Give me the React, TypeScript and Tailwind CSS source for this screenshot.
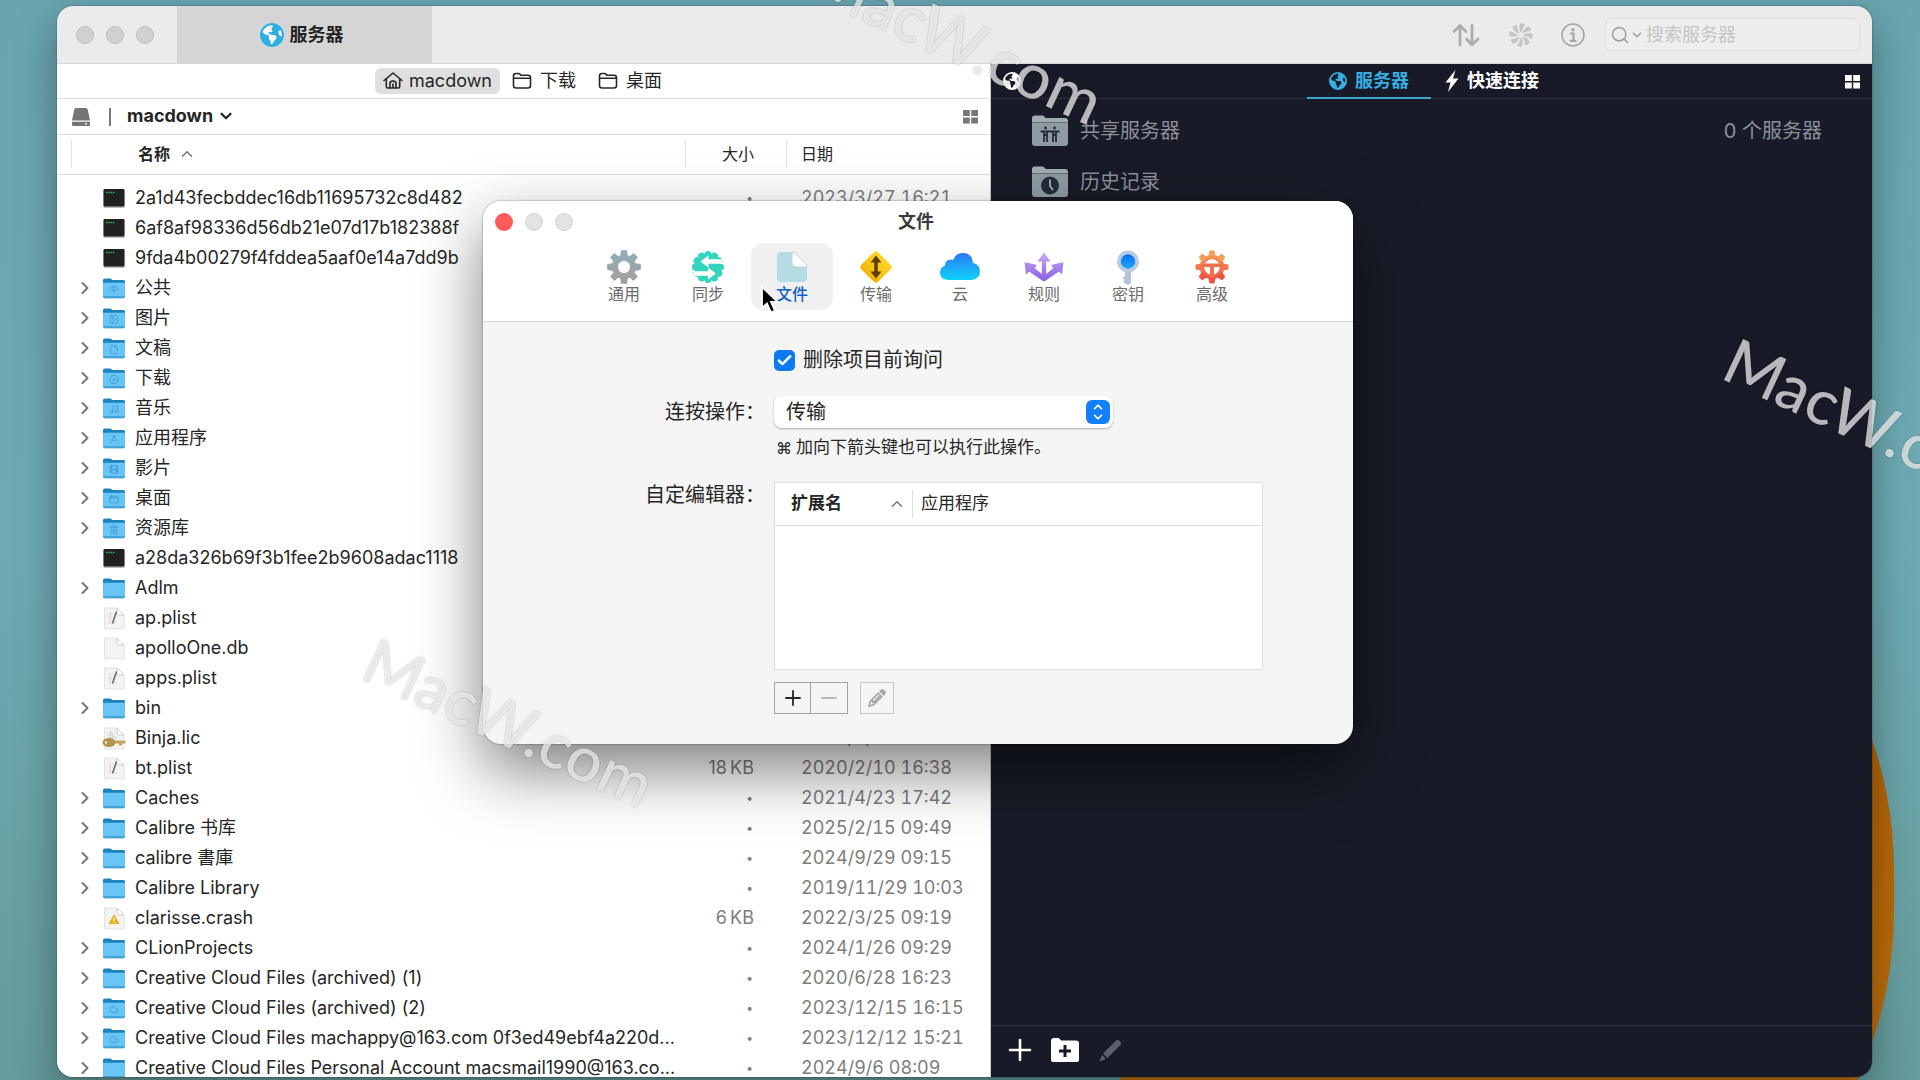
import type { ReactNode } from 'react';
import {
  AppWindow, Check, ChevronDown, ChevronRight, ChevronUp, CircleArrowDown, Cloud, File, Film,
  Image as ImageIcon, Landmark, Minus, Music, Plus, Search, Signpost, DraftingCompass,
} from 'lucide-react';
import { FaEarthAmericas, FaPencil } from 'react-icons/fa6';

type FileKind = 'folder' | 'exec' | 'plist' | 'doc' | 'license' | 'crash';

interface FileRow {
  name: string;
  kind: FileKind;
  badge?: typeof File;
  size?: string;
  date: string;
}

const files: FileRow[] = [
  { name: '2a1d43fecbddec16db11695732c8d482', kind: 'exec', date: '2023/3/27 16:21' },
  { name: '6af8af98336d56db21e07d17b182388f', kind: 'exec', date: '2023/3/27 16:21' },
  { name: '9fda4b00279f4fddea5aaf0e14a7dd9b', kind: 'exec', date: '2023/3/27 16:21' },
  { name: '公共', kind: 'folder', badge: Signpost, date: '2021/4/23 17:42' },
  { name: '图片', kind: 'folder', badge: ImageIcon, date: '2024/9/29 09:15' },
  { name: '文稿', kind: 'folder', badge: File, date: '2025/2/15 09:49' },
  { name: '下载', kind: 'folder', badge: CircleArrowDown, date: '2025/2/15 09:49' },
  { name: '音乐', kind: 'folder', badge: Music, date: '2024/1/26 09:29' },
  { name: '应用程序', kind: 'folder', badge: DraftingCompass, date: '2024/1/26 09:29' },
  { name: '影片', kind: 'folder', badge: Film, date: '2024/9/29 09:15' },
  { name: '桌面', kind: 'folder', badge: AppWindow, date: '2025/2/15 09:49' },
  { name: '资源库', kind: 'folder', badge: Landmark, date: '2024/9/29 09:15' },
  { name: 'a28da326b69f3b1fee2b9608adac1118', kind: 'exec', date: '2023/3/27 16:21' },
  { name: 'Adlm', kind: 'folder', date: '2022/3/25 09:19' },
  { name: 'ap.plist', kind: 'plist', size: '6\u2009KB', date: '2020/2/10 16:38' },
  { name: 'apolloOne.db', kind: 'doc', size: '6\u2009KB', date: '2020/2/10 16:38' },
  { name: 'apps.plist', kind: 'plist', size: '6\u2009KB', date: '2020/2/10 16:38' },
  { name: 'bin', kind: 'folder', date: '2021/4/23 17:42' },
  { name: 'Binja.lic', kind: 'license', size: '6\u2009KB', date: '2020/2/10 16:38' },
  { name: 'bt.plist', kind: 'plist', size: '18\u2009KB', date: '2020/2/10 16:38' },
  { name: 'Caches', kind: 'folder', date: '2021/4/23 17:42' },
  { name: 'Calibre 书库', kind: 'folder', date: '2025/2/15 09:49' },
  { name: 'calibre 書庫', kind: 'folder', date: '2024/9/29 09:15' },
  { name: 'Calibre Library', kind: 'folder', date: '2019/11/29 10:03' },
  { name: 'clarisse.crash', kind: 'crash', size: '6\u2009KB', date: '2022/3/25 09:19' },
  { name: 'CLionProjects', kind: 'folder', date: '2024/1/26 09:29' },
  { name: 'Creative Cloud Files (archived) (1)', kind: 'folder', date: '2020/6/28 16:23' },
  { name: 'Creative Cloud Files (archived) (2)', kind: 'folder', badge: Cloud, date: '2023/12/15 16:15' },
  { name: 'Creative Cloud Files machappy@163.com 0f3ed49ebf4a220d...', kind: 'folder', badge: Cloud, date: '2023/12/12 15:21' },
  { name: 'Creative Cloud Files Personal Account macsmail1990@163.co...', kind: 'folder', date: '2024/9/6 08:09' },
];

function FileIcon({ kind, badge: Badge }: { kind: FileKind; badge?: typeof File }) {
  if (kind === 'folder') {
    return (
      <svg className="size-6 shrink-0" viewBox="0 0 24 24">
        <path d="M1 4.2Q1 2.5 2.7 2.5H8q1 0 1.6.8l.6.7h11.3q1.5 0 1.5 1.5V18H1z" fill="#1c83bd" />
        <path d="M1 6.8h22v13.7q0 1.8-1.8 1.8H2.8Q1 22.3 1 20.5z" fill="#68c5f6" />
        <path d="M1 20v.5q0 1.8 1.8 1.8h18.4q1.8 0 1.8-1.8V20z" fill="#45a3d8" />
        {Badge && <Badge x={7} y={8.5} width={10} height={10} color="#3f9fd6" strokeWidth={2.2} />}
      </svg>
    );
  }
  if (kind === 'exec') {
    return (
      <svg className="size-6 shrink-0" viewBox="0 0 24 24">
        <rect x="1.5" y="4" width="21" height="18" rx="1" fill="#bdbdbd" />
        <rect x="1.5" y="3" width="21" height="17.5" rx="1" fill="#202121" />
        <path d="M4 6.5h9" stroke="#34a853" strokeWidth="1.6" strokeDasharray="1.6 .7" />
      </svg>
    );
  }
  return (
    <svg className="size-6 shrink-0" viewBox="0 0 24 24">
      <path d="M2.500 2H15l7 7V22q0 1-1 1H3.500q-1 0-1-1z" fill="#f3f3f3" stroke="#dcdcdc" strokeWidth=".8" />
      <path d="M15 2v5.500Q15 9 16.500 9H22z" fill="#fff" stroke="#c4c4c4" strokeWidth=".8" />
      {kind === 'plist' && (
        <>
          <path d="M6 8h8M6 11h5M6 14h5M6 17h9M8 8v9" stroke="#e2d3d3" strokeWidth=".8" />
          <path d="M14.500 5.500l-4 12" stroke="#666" strokeWidth="1.500" />
        </>
      )}
      {kind === 'license' && (
        <>
          <path d="M9 4q-5 5-2 9h9q-4-3-7-9z" fill="#dedede" />
          <path d="M12 14.500h11.500v3H20v2h-3v-2h-5z" fill="#c3a564" />
          <ellipse cx="7" cy="16.500" rx="6.500" ry="4.500" fill="#b39450" />
          <circle cx="4" cy="16.500" r="1.200" fill="#f3ead3" />
        </>
      )}
      {kind === 'crash' && (
        <>
          <path d="M12 8l5.500 10h-11z" fill="#e3b31c" />
          <path d="M12 11.500v3.500M12 16v1" stroke="#fff" strokeWidth="1.200" />
        </>
      )}
    </svg>
  );
}

function OutlineFolder() {
  return (
    <svg className="h-5 w-5" viewBox="0 0 20 20" fill="none" stroke="#262626" strokeWidth="1.6" strokeLinejoin="round">
      <path d="M1.500 5q0-2.500 2.500-2.500h2.500q1 0 1.600.8l.6.9H16q2.500 0 2.500 2.500V14.500q0 2.500-2.500 2.500H4q-2.500 0-2.500-2.500zM1.500 7.300h17" />
    </svg>
  );
}

function GridIcon({ className }: { className: string }) {
  return (
    <svg className={className} viewBox="0 0 15 15" fill="currentColor">
      <path d="M0 1h6.800v6H0zM8.200 1H15v6H8.200zM0 8.400h6.800v6H0zM8.200 8.400H15v6H8.200z" />
    </svg>
  );
}

function TrafficLights({ active }: { active?: boolean }) {
  return (
    <div className="flex gap-3">
      <button aria-label="关闭" className={active ? 'size-[18px] rounded-full bg-[#fc5b57]' : 'size-[18px] rounded-full border border-[#bcbcbc] bg-[#d1d1d1]'} />
      <button aria-label="最小化" className={active ? 'size-[18px] rounded-full border border-[#d4d4d4] bg-[#e3e3e3]' : 'size-[18px] rounded-full border border-[#bcbcbc] bg-[#d1d1d1]'} />
      <button aria-label="缩放" className={active ? 'size-[18px] rounded-full border border-[#d4d4d4] bg-[#e3e3e3]' : 'size-[18px] rounded-full border border-[#bcbcbc] bg-[#d1d1d1]'} />
    </div>
  );
}

function TitleBar() {
  return (
    <header className="flex h-[58px] shrink-0 items-center border-b border-[#d6d6d6] bg-[#ebebeb]">
      <div className="w-[120px] shrink-0 pl-[19px]">
        <TrafficLights />
      </div>
      <button className="flex h-full w-[255px] shrink-0 items-center justify-center gap-1.5 bg-[#d5d5d5] pr-1.5 text-lg font-bold text-[#222]">
        <span className="flex size-6 items-center justify-center rounded-full bg-white">
          <FaEarthAmericas className="size-6 text-[#2eaee2]" />
        </span>
        服务器
      </button>
      <div className="ml-auto flex items-center pr-3">
        <button aria-label="传输列表" className="mr-[29px]">
          <svg className="h-7 w-7" viewBox="0 0 28 28" fill="none" stroke="#adadad" strokeWidth="2.800" strokeLinecap="round" strokeLinejoin="round">
            <path d="M8 24V4.500M2 10.500l6-6 6 6M20 4.500V24M14.500 18l5.500 6 6-6" />
          </svg>
        </button>
        <button aria-label="活动" className="mr-7">
          <svg className="h-6 w-6" viewBox="-12 -12 24 24" fill="#c4c4c4">
            {[0, 45, 90, 135, 180, 225, 270, 315].map((a) => (
              <path key={a} transform={`rotate(${a})`} d="M0-2C-2-5-2-8.500-1-11.500 1.500-12 3.500-11 4-10 2-8 1-5 0-2z" />
            ))}
          </svg>
        </button>
        <button aria-label="简介" className="mr-5">
          <svg className="h-6 w-6" viewBox="0 0 24 24" fill="none" stroke="#a6a6a6" strokeWidth="1.600">
            <circle cx="12" cy="12" r="11" />
            <circle cx="12" cy="6.800" r="1.800" fill="#a6a6a6" stroke="none" />
            <path d="M9 10.500h3.500v7M8.800 17.800h6.700" strokeWidth="2.200" />
          </svg>
        </button>
        <label className="flex h-[33px] w-[255px] items-center rounded-md border border-[#dcdcdc] bg-[#eeeeee] pl-1">
          <Search className="size-5 text-[#9d9d9d]" strokeWidth={1.8} />
          <ChevronDown className="size-3.5 text-[#9d9d9d]" strokeWidth={2.5} />
          <input
            type="text"
            aria-label="搜索服务器"
            placeholder="搜索服务器"
            className="ml-0.5 w-40 bg-transparent text-lg outline-none placeholder:text-[#c4c4c4]"
          />
        </label>
      </div>
    </header>
  );
}

function FileTable() {
  return (
    <table className="w-full table-fixed border-collapse text-left text-lg">
      <colgroup>
        <col className="w-[629px]" />
        <col className="w-[101px]" />
        <col />
      </colgroup>
      <thead>
        <tr className="h-[39px] border-b border-[#dedede] text-base leading-6">
          <th className="p-0 pl-3.5">
            <div className="flex h-7 items-center gap-2 border-x border-[#e3e3e3] pl-[66px] font-bold">
              名称
              <ChevronUp className="size-[18px] text-[#777]" strokeWidth={2} />
            </div>
          </th>
          <th className="p-0 font-normal">
            <div className="flex h-7 items-center justify-end border-r border-[#e3e3e3] pr-8">大小</div>
          </th>
          <th className="p-0 pl-3.5 font-normal">日期</th>
        </tr>
      </thead>
      <tbody>
        <tr aria-hidden="true" className="h-[9px]">
          <td colSpan={3} className="p-0" />
        </tr>
        {files.map((file) => (
          <tr key={file.name} className="h-[30px]">
            <td className="p-0">
              <div className="flex h-[30px] items-center pl-[18px]">
                {file.kind === 'folder' ? (
                  <button aria-label={`展开 ${file.name}`} className="w-[27px]">
                    <ChevronRight className="size-5 text-[#777]" strokeWidth={2.5} />
                  </button>
                ) : (
                  <span className="w-[27px]" />
                )}
                <FileIcon kind={file.kind} badge={file.badge} />
                <span className="ml-[9px] whitespace-nowrap">{file.name}</span>
              </div>
            </td>
            <td className="p-0 pr-[33px] text-[#7d7d7d]">
              <div className="flex h-[30px] items-center justify-end whitespace-nowrap">
                {file.size ?? <span className="pr-px text-xs">•</span>}
              </div>
            </td>
            <td className="whitespace-nowrap p-0 pl-3.5 leading-[30px] tabular-nums text-[#7d7d7d]">{file.date}</td>
          </tr>
        ))}
      </tbody>
    </table>
  );
}

function LocalPane() {
  return (
    <section className="flex min-w-0 flex-col overflow-hidden border-r border-[#c9c9c9] bg-white text-[#262626]">
      <nav className="flex h-[35px] shrink-0 items-center justify-center gap-3 border-b border-[#dedede] pr-2.5 text-lg">
        <button className="flex h-[26px] items-center gap-1.5 rounded-md bg-[#dfdfdf] px-2">
          <svg className="h-5 w-5" viewBox="0 0 20 20" fill="none" stroke="#262626" strokeWidth="1.600" strokeLinejoin="round" strokeLinecap="round">
            <path d="M1 9.500L10 2l9 7.500M3.300 8v7.500q0 1.500 1.500 1.500h10.400q1.500 0 1.500-1.500V8M7 17v-4.500Q7 10 10 10t3 2.500V17M10 17v-4" />
          </svg>
          macdown
        </button>
        <button className="flex items-center gap-2">
          <OutlineFolder />
          下载
        </button>
        <button className="ml-2.5 flex items-center gap-2">
          <OutlineFolder />
          桌面
        </button>
      </nav>
      <div className="flex h-9 shrink-0 items-center border-b border-[#dedede] pl-3.5 pr-3">
        <svg className="h-5 w-5" viewBox="0 0 20 20" fill="#757575">
          <path d="M3.200 2.800Q3.500 1 5.300 1h9.400q1.800 0 2.100 1.800L19 13.500H1zM1 14.700h18V17.500q0 1.500-1.500 1.500h-15Q1 19 1 17.500zm13 1.500v1.400h2v-1.400z" />
        </svg>
        <span className="ml-[18px] mr-4 h-[18px] w-0.5 bg-[#777]" />
        <button className="flex items-center gap-1 pb-0.5 text-lg font-bold">
          macdown
          <ChevronDown className="size-[18px]" strokeWidth={3} />
        </button>
        <button aria-label="显示方式" className="ml-auto">
          <GridIcon className="size-[15px] text-[#777]" />
        </button>
      </div>
      <div className="min-h-0 flex-1 overflow-hidden">
        <FileTable />
      </div>
    </section>
  );
}

function GreyFolder({ children }: { children: ReactNode }) {
  return (
    <svg className="h-8 w-9" viewBox="0 0 36 32">
      <path d="M0 3.500Q0 .5 3 .5h7q1.500 0 2.500 1.200L13.500 3H33q3 0 3 3v3H0z" fill="#a3aab2" />
      <path d="M0 8h36v20q0 3-3 3H3q-3 0-3-3z" fill="#919aa3" />
      <path d="M0 7.500h36" stroke="#666d76" />
      {children}
    </svg>
  );
}

function ServerPane() {
  return (
    <section className="flex min-w-0 flex-col bg-[#181b27] text-[#8d909b]">
      <div className="flex h-[35px] shrink-0 items-center border-b border-[#2d303b] pl-3 pr-3 text-white">
        <FaEarthAmericas className="size-[18px]" />
        <nav className="flex h-[35px] flex-1 items-stretch justify-center pr-1.5 text-lg font-bold">
          <button className="flex items-center gap-2 border-b-2 border-[#3ca5cf] px-[22px] pt-0.5 text-[#36b0e2]">
            <FaEarthAmericas className="size-[18px]" />
            服务器
          </button>
          <button className="flex items-center gap-2 px-3.5">
            <svg className="h-[22px] w-3.5" viewBox="0 0 14 22" fill="white">
              <path d="M10.500 0L.5 12.500h5L3 22 13.500 8.500H8z" />
            </svg>
            快速连接
          </button>
        </nav>
        <button aria-label="显示方式">
          <GridIcon className="size-[15px] text-white" />
        </button>
      </div>
      <ul className="flex-1 pl-[41px] pt-1.5 text-xl">
        <li className="flex h-[51px] items-center gap-3">
          <GreyFolder>
            <g fill="#252c38" stroke="#252c38">
              <circle cx="13.500" cy="13" r="1.400" stroke="none" />
              <circle cx="22.500" cy="13" r="1.400" stroke="none" />
              <path d="M8.500 16.500h19M12 17v10M15 17v10M21 17v10M24 17v10M12 20h3M21 20h3" fill="none" strokeWidth="1.800" />
            </g>
          </GreyFolder>
          共享服务器
          <span className="ml-auto mr-[50px]">0 个服务器</span>
        </li>
        <li className="flex h-[51px] items-center gap-3">
          <GreyFolder>
            <circle cx="18" cy="19.500" r="9" fill="#252c38" />
            <path d="M18 13.500V20l3 4" fill="none" stroke="#b6bec6" strokeWidth="1.600" />
          </GreyFolder>
          历史记录
        </li>
      </ul>
      <footer className="flex h-[52px] shrink-0 items-center border-t border-[#2d303b] pb-[3px] pl-3.5">
        <button aria-label="添加服务器" className="mr-4">
          <svg className="size-[30px]" viewBox="0 0 30 30" stroke="white" strokeWidth="2.600" strokeLinecap="round">
            <path d="M15 5v20M5 15h20" />
          </svg>
        </button>
        <button aria-label="新建文件夹" className="mr-5">
          <svg className="h-[26px] w-[28px]" viewBox="0 0 28 26">
            <path d="M0 4q0-3 3-3h4q1 0 1.600.8L10 3.500h15q3 0 3 3V23q0 2-2 2H2q-2 0-2-2z" fill="white" />
            <path d="M14 8v12M8 14h12" stroke="#181b27" strokeWidth="3" />
          </svg>
        </button>
        <button aria-label="编辑" disabled>
          <svg className="h-6 w-6" viewBox="0 0 24 24" fill="#5c5f69">
            <path d="M17 2.500q1.500-1.500 3 0l1.500 1.500q1.500 1.500 0 3L8.500 20 4 15.500zM3 17l4 4-6.500 2.500z" />
          </svg>
        </button>
      </footer>
    </section>
  );
}

const gearTeeth = [0, 45, 90, 135, 180, 225, 270, 315];

const gradients = (
  <svg className="absolute size-0" aria-hidden="true">
    <defs>
      <linearGradient id="gear" x1="0" y1="0" x2="0" y2="34" gradientUnits="userSpaceOnUse">
        <stop stopColor="#93aeba" /><stop offset="1" stopColor="#a29e98" />
      </linearGradient>
      <linearGradient id="cloud" x2="0" y2="1">
        <stop stopColor="#2b78f3" /><stop offset="1" stopColor="#0fd3fb" />
      </linearGradient>
      <linearGradient id="rules" x1="0" y1="0" x2="0" y2="34" gradientUnits="userSpaceOnUse">
        <stop stopColor="#cdb4f4" /><stop offset="1" stopColor="#8257e3" />
      </linearGradient>
      <linearGradient id="yellow" x2="0" y2="1">
        <stop stopColor="#fbd82c" /><stop offset="1" stopColor="#f4b504" />
      </linearGradient>
      <linearGradient id="advanced" x1="0" y1="0" x2="0" y2="34" gradientUnits="userSpaceOnUse">
        <stop stopColor="#f7a45c" /><stop offset="1" stopColor="#ee4b42" />
      </linearGradient>
      <linearGradient id="keyhead" x2="0" y2="1">
        <stop stopColor="#0a6fee" /><stop offset="1" stopColor="#22a6ff" />
      </linearGradient>
    </defs>
  </svg>
);

// One closed outline, so a vertical gradient runs evenly over ring and teeth
function Gear({ fill }: { fill: string }) {
  const point = (r: number, deg: number) => {
    const a = (deg * Math.PI) / 180;
    return `${(20 + r * Math.sin(a)).toFixed(2)} ${(17 - r * Math.cos(a)).toFixed(2)}`;
  };
  const outline = gearTeeth
    .map((a) => `${point(11.8, a - 16)}L${point(16.5, a - 9)}L${point(16.5, a + 9)}L${point(11.8, a + 16)}`)
    .join('L');
  return (
    <path
      d={`M${outline}ZM20 10.500a6.500 6.500 0 1 0 .01 0Z`}
      fill={fill}
      fillRule="evenodd"
      stroke={fill}
      strokeWidth="1"
      strokeLinejoin="round"
    />
  );
}

const tabs: { label: string; icon: ReactNode }[] = [
  { label: '通用', icon: <Gear fill="url(#gear)" /> },
  {
    label: '同步',
    icon: (
      <>
        <circle cx="20" cy="17" r="13.500" fill="#33d6bd" />
        {[0, 30, 60, 90, 120, 150, 180, 210, 240, 270, 300, 330].map((a) => (
          <circle key={a} cx="20" cy="4.500" r="3.600" fill="#33d6bd" transform={`rotate(${a} 20 17)`} />
        ))}
        <path d="M12.500 11.500l8-6v3.700H34v4.600H20.500v3.700zM28 23.500l-8-6v3.700H6v4.600h14v3.700z" fill="white" />
      </>
    ),
  },
  {
    label: '文件',
    icon: (
      <>
        <path d="M5 6q0-4 4-4h12l14 14v12q0 4-4 4H9q-4 0-4-4z" fill="#b5dbe3" />
        <path d="M20 2q2 0 4 2l9 9q2 2 2 4H24q-4 0-4-4z" fill="#fcfcfc" stroke="#b9cdd0" strokeWidth=".8" />
      </>
    ),
  },
  {
    label: '传输',
    icon: (
      <>
        <rect x="8" y="5" width="24" height="24" rx="3.500" transform="rotate(45 20 17)" fill="url(#yellow)" />
        <path d="M20 5.500l5.500 7h-3.700v9h3.700L20 28.500l-5.500-7h3.700v-9h-3.700z" fill="#5b3f06" />
      </>
    ),
  },
  {
    label: '云',
    icon: <path d="M8 30q-8-.5-8-7.500 0-5 5-7 0-6 6-6 1 0 2 .5Q15.500 3 23 3q9 0 10 10 7 1.500 7 8.500t-8 8.500z" fill="url(#cloud)" />,
  },
  {
    label: '规则',
    icon: (
      <path
        d="M20 2.500l6.500 9h-4.300V24l7.300-6-2.500-3 12.500-3-1.500 12.500-3-3L21 31q-1 .7-2 0L5 21.500l-3 3L.5 12 13 15l-2.500 3 7.300 6V11.500h-4.300z"
        fill="url(#rules)"
      />
    ),
  },
  {
    label: '密钥',
    icon: (
      <>
        <path d="M17.500 20h5v13.500q-2.500 1.500-5 0l-2-2 2-1.500-2.500-2 2.500-2z" fill="#b3c3d4" stroke="#9fb2c6" strokeWidth=".6" />
        <circle cx="20" cy="11.500" r="11" fill="#b9cbdd" />
        <circle cx="20" cy="11.500" r="7.200" fill="url(#keyhead)" />
      </>
    ),
  },
  {
    label: '高级',
    icon: (
      <>
        <circle cx="20" cy="17" r="10" fill="none" stroke="url(#advanced)" strokeWidth="4.500" />
        {gearTeeth.map((a) => (
          <path
            key={a}
            transform={`rotate(${a} 20 17)`}
            d="M17.300 1.500q.2-1 1.200-1h3q1 0 1.200 1l.8 5h-7z"
            fill={a === 0 || a === 45 || a === 315 ? '#f69d5a' : a === 90 || a === 270 ? '#f2784f' : '#ee5044'}
          />
        ))}
        <path d="M9 13.500h22v3.500H9zM18 15h4v13h-4z" fill="#f2704c" />
      </>
    ),
  },
];

function SettingsDialog() {
  return (
    <div
      role="dialog"
      aria-label="文件"
      className="absolute left-[483px] top-[201px] w-[870px] overflow-hidden rounded-[18px] bg-[#f5f5f5] text-[#262626] shadow-[0_0_2px_rgba(0,0,0,0.5),0_26px_64px_rgba(0,0,0,0.5)]"
    >
      {gradients}
      <header className="border-b border-[#d6d6d6] bg-white pb-[11px]">
        <div className="grid h-[42px] grid-cols-[1fr_auto_1fr] items-center pl-3 pr-4">
          <TrafficLights active />
          <h1 className="text-lg font-bold text-[#3a3a3a]">文件</h1>
        </div>
        <div role="tablist" className="flex justify-center gap-0.5">
          {tabs.map((tab) => {
            const selected = tab.label === '文件';
            return (
              <button
                key={tab.label}
                role="tab"
                aria-selected={selected}
                className={
                  selected
                    ? 'flex h-[67px] w-[82px] flex-col items-center rounded-xl bg-[#f0f0f0] pt-[7px] text-base font-medium text-[#1560c4]'
                    : 'flex h-[67px] w-[82px] flex-col items-center rounded-xl pt-[7px] text-base text-[#6b6b6b]'
                }
              >
                <svg className="h-[34px] w-10" viewBox="0 0 40 34" overflow="visible">{tab.icon}</svg>
                <span className="leading-5">{tab.label}</span>
              </button>
            );
          })}
        </div>
      </header>
      <div className="grid grid-cols-[282px_1fr] gap-x-[9px] pb-[30px] pt-[22px] text-xl">
        <label className="col-start-2 flex h-8 w-fit items-center gap-2">
          <span className="relative flex size-[21px]">
            <input type="checkbox" defaultChecked className="size-[21px] appearance-none rounded-[5px] bg-[#0a7bf4]" />
            <Check className="pointer-events-none absolute left-0.5 top-0.5 size-[17px] text-white" strokeWidth={3.5} />
          </span>
          删除项目前询问
        </label>

        <label htmlFor="double-click" className="mt-5 h-8 text-right leading-8">连按操作：</label>
        <div className="relative mt-5 w-[339px]">
          <select id="double-click" className="h-8 w-full appearance-none rounded-lg bg-white pl-3 leading-8 shadow-[0_1px_2px_rgba(0,0,0,0.3)] outline-none">
            <option>传输</option>
          </select>
          <span className="pointer-events-none absolute right-[3px] top-1 flex size-6 flex-col items-center justify-center rounded-md bg-[#1180fa] text-white">
            <ChevronUp className="-mb-1 size-4" strokeWidth={3} />
            <ChevronDown className="size-4" strokeWidth={3} />
          </span>
        </div>
        <p className="col-start-2 mt-2 flex h-6 items-center gap-1 pl-0.5 text-[17px]">
          <span className="text-base">⌘</span>加向下箭头键也可以执行此操作。
        </p>

        <span id="editors" className="mt-[19px] text-right leading-8">自定编辑器：</span>
        <div className="mt-[22px] h-[188px] w-[489px] border border-[#dedede] bg-white">
          <table aria-labelledby="editors" className="w-full table-fixed border-collapse text-left text-[17px]">
            <thead>
              <tr className="h-[42px] border-b border-[#dedede]">
                <th className="w-[138px] p-0">
                  <div className="flex h-7 items-center justify-between border-r border-[#dedede] pl-4 pr-1.5 font-bold">
                    扩展名
                    <ChevronUp className="size-[18px] text-[#777]" strokeWidth={2} />
                  </div>
                </th>
                <th className="p-0 pl-2 font-normal">应用程序</th>
              </tr>
            </thead>
            <tbody />
          </table>
        </div>
        <div className="col-start-2 mt-3 flex gap-3">
          <div className="flex h-8 border border-[#a3a3a3]">
            <button aria-label="添加" className="flex w-9 items-center justify-center border-r border-[#a3a3a3]">
              <Plus className="size-6" strokeWidth={1.8} />
            </button>
            <button aria-label="移除" disabled className="flex w-9 items-center justify-center text-[#b8b8b8]">
              <Minus className="size-6" strokeWidth={1.8} />
            </button>
          </div>
          <button aria-label="编辑" disabled className="flex h-8 w-[34px] items-center justify-center border border-[#c6c6c6] text-[#a8a8a8]">
            <FaPencil className="size-[18px]" />
          </button>
        </div>
      </div>
    </div>
  );
}

const stampClass =
  "pointer-events-none absolute origin-bottom-left rotate-[25deg] font-['Lato'] text-[63px] leading-none font-medium text-white/70 [text-shadow:0_0_2px_rgba(0,0,0,0.3)]";

export default function App() {
  return (
    <div className="relative flex h-screen w-full overflow-hidden bg-linear-to-b from-[#69a5b0] via-[#6eaab3] to-[#659b9b] pb-[3px] pl-[57px] pr-12 pt-1.5 font-['Inter','Noto_Sans_CJK_SC',sans-serif]">
      <div className="absolute left-[1084px] top-[466px] h-[850px] w-[810px] rounded-full bg-linear-to-b from-[#a85a05] to-[#c8780f]" />
      <main className="relative flex min-w-0 flex-1 flex-col overflow-hidden rounded-[16px] shadow-[0_0_0_1px_rgba(0,0,0,0.12),0_16px_40px_rgba(0,0,0,0.35)]">
        <TitleBar />
        <div className="grid min-h-0 flex-1 grid-cols-[934fr_881fr]">
          <LocalPane />
          <ServerPane />
        </div>
      </main>
      <SettingsDialog />
      <span aria-hidden="true" className={`${stampClass} left-[804px] top-[-62px]`}>MacW.com</span>
      <span aria-hidden="true" className={`${stampClass} left-[355px] top-[621px]`}>MacW.com</span>
      <span aria-hidden="true" className={`${stampClass} left-[1716px] top-[321px]`}>MacW.com</span>
      <svg className="pointer-events-none absolute left-[760px] top-[284px] h-8 w-5" viewBox="0 0 20 32">
        <path d="M2 3v21l5-4.500 4 9 4-2-4-8.500h7z" fill="#000" stroke="#fff" strokeWidth="1.800" />
      </svg>
    </div>
  );
}
